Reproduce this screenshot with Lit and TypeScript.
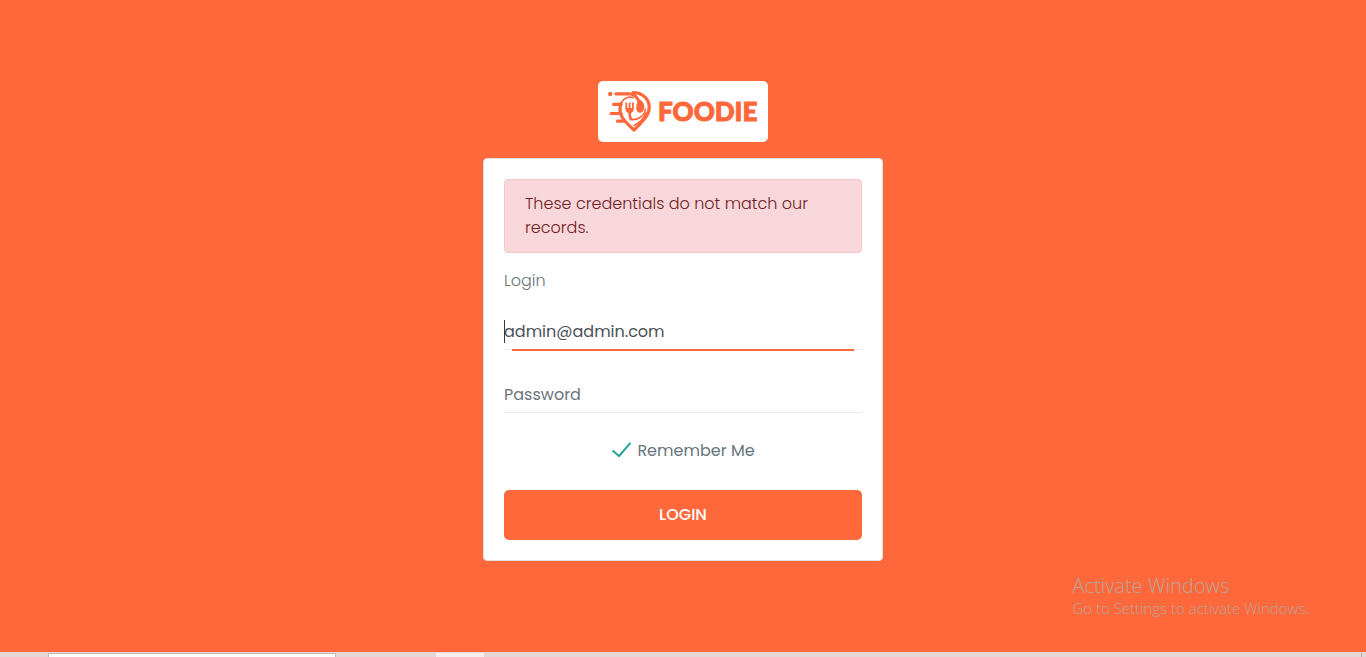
import { LitElement, html, css } from "lit";
import { customElement, state } from "lit/decorators.js";

@customElement("app-root")
export class AppRoot extends LitElement {
  @state() private login = "admin@admin.com";
  @state() private remember = true;

  static styles = css`
    :host {
      display: block;
      font-family: Poppins, Inter, sans-serif;
      font-size: 16px;
      line-height: 24px;
      color: #67757c;
    }
    * { box-sizing: border-box; }
    .page {
      position: relative;
      display: flex;
      flex-direction: column;
      min-height: 100vh;
      background: #ff683a;
    }
    .main {
      flex: 1;
      display: flex;
      flex-direction: column;
      align-items: center;
      justify-content: center;
      gap: 16px;
      padding-bottom: 10px;
    }
    .brand {
      display: block;
      padding: 8px 8px 8px 9px;
      border-radius: 5px;
      background: #fff;
      width: 170px;
      text-decoration: none;
    }
    .logo { display: block; width: 152px; height: 45px; }
    .word {
      font: 900 26px Lato, sans-serif;
      fill: #ff683a;
      stroke: #ff683a;
      stroke-width: 1px;
      stroke-linejoin: round;
    }
    .card {
      width: 100%;
      max-width: 400px;
      padding: 20px;
      border: 1px solid #dfdfdf;
      border-radius: 4px;
      background: #fff;
      display: flex;
      flex-direction: column;
    }
    .alert {
      padding: 12px 20px;
      border: 1px solid #f5c6cb;
      border-radius: 4px;
      background: #f8d7da;
      color: #721c24;
      font-weight: 300;
      margin-bottom: 16px;
    }
    .label { font-weight: 300; margin-bottom: 19px; }
    .field { position: relative; display: flex; margin-bottom: 25px; }
    .input {
      flex: 1;
      min-width: 0;
      height: 38px;
      padding: 7px 0 6px;
      border: 0;
      border-bottom: 1px solid #e9ecef;
      border-radius: 0;
      background: transparent;
      font: inherit;
      color: #495057;
      outline: none;
    }
    .input::placeholder { color: #6c757d; opacity: 1; }
    .focused::after {
      content: "";
      position: absolute;
      left: 8px;
      right: 8px;
      bottom: -1px;
      height: 2px;
      background: #ff683a;
    }
    .focused::before {
      content: "";
      position: absolute;
      left: 0;
      top: 8px;
      width: 1px;
      height: 23px;
      background: #343a40;
    }
    .remember {
      display: flex;
      align-items: center;
      justify-content: center;
      gap: 5px;
      margin: 1px 0 27px;
      cursor: pointer;
    }
    .tick { display: grid; width: 21px; height: 18px; }
    .box, .mark { grid-area: 1 / 1; width: 100%; height: 100%; margin: 0; }
    .box { appearance: none; }
    .mark { pointer-events: none; visibility: hidden; }
    .box:checked + .mark { visibility: visible; }
    .submit {
      height: 50px;
      border: 0;
      border-radius: 5px;
      background: #ff683a;
      color: #fff;
      font: inherit;
      font-weight: 500;
      text-transform: uppercase;
      cursor: pointer;
    }
    .notice {
      position: absolute;
      right: 57px;
      bottom: 39px;
      font-family: "Segoe UI", "Open Sans", sans-serif;
      font-size: 15px;
      font-weight: 300;
      line-height: 20px;
      color: #b8a69c;
    }
    .notice-title { font-size: 20px; line-height: 24px; }
    .taskbar {
      display: flex;
      height: 5px;
      border-top: 1px solid #e8d8d4;
      background: #e6d7d4;
    }
    .task-search {
      width: 288px;
      margin: 0 100px 0 48px;
      border: 1px solid #bdbdbd;
      border-bottom: 0;
      background: #fff;
    }
    .task-active { width: 48px; background: #f8f0ef; }
    .task-edge { width: 5px; margin-left: auto; border-left: 1px solid #b5aaa8; }
  `;

  render() {
    return html`
      <div class="page">
        <main class="main">
          <a class="brand" href="#" aria-label="Foodie">
            <svg class="logo" viewBox="0 0 152 45" aria-hidden="true">
              <g fill="none" stroke="#ff683a" stroke-linecap="round" stroke-linejoin="round">
                <path stroke-width="3.200" d="M8.800 4.800H21M6.500 15.300H14M4 24.500H14M10.500 32.200H17" />
                <path stroke-width="3.200" d="M14 14.500C12.500 19 12.800 24 15 28C17.500 32.500 22 36.500 27 41C32 36 37.500 31 40.500 25.500C44 18 42 10.500 36 6.500C33 4.300 29.500 3.500 26 3.500" />
                <path stroke-width="3" d="M21 4.800C27 4.800 30.500 7.500 32.500 14" />
                <path stroke-width="1.600" d="M14 14.500C16.500 9.500 21 7.300 26 8.600" />
                <path stroke-width="1.600" d="M23 30.500C31 31.500 37.500 27 38.500 20M27 36.500C33 33.500 37 29 39 24" />
                <path stroke-width="1.800" stroke-linecap="butt" d="M19.300 13.500V20M22.600 13.500V21M25.900 13.500V20" />
                <path stroke-width="2.600" d="M22.800 23C22.500 26 22.300 28.500 24.500 30" />
              </g>
              <circle cx="3.200" cy="5" r="2.200" fill="#ff683a" />
              <path fill="#ff683a" d="M18.400 19H26.800C26.800 22.500 25.500 24 22.600 24C19.700 24 18.400 22.500 18.400 19Z" />
              <path fill="#ff683a" d="M32 10C36.500 12.500 38 16.500 37 20C36 24.500 31 25 29.500 21C28.500 17.500 30 13.500 32 10Z" />
              <text class="word" x="51" y="32">FOODIE</text>
            </svg>
          </a>
          <form class="card" @submit=${(e: Event) => e.preventDefault()}>
            <div class="alert" role="alert">These credentials do not match our records.</div>
            <label class="label" for="login">Login</label>
            <div class="field focused">
              <input class="input" id="login" type="text" .value=${this.login}
                @input=${(e: Event) => (this.login = (e.target as HTMLInputElement).value)} />
            </div>
            <div class="field">
              <input class="input" type="password" placeholder="Password" aria-label="Password" />
            </div>
            <label class="remember">
              <span class="tick">
                <input class="box" type="checkbox" .checked=${this.remember}
                  @change=${(e: Event) => (this.remember = (e.target as HTMLInputElement).checked)} />
                <svg class="mark" viewBox="0 0 21 18" aria-hidden="true">
                  <path d="M1.500 8.500L8 14L19.500 0.800" fill="none" stroke="#26a69a" stroke-width="2" />
                </svg>
              </span>
              Remember Me
            </label>
            <button class="submit" type="submit">Login</button>
          </form>
        </main>
        <aside class="notice">
          <div class="notice-title">Activate Windows</div>
          <div>Go to Settings to activate Windows.</div>
        </aside>
        <div class="taskbar">
          <div class="task-search"></div>
          <div class="task-active"></div>
          <div class="task-edge"></div>
        </div>
      </div>
    `;
  }
}
